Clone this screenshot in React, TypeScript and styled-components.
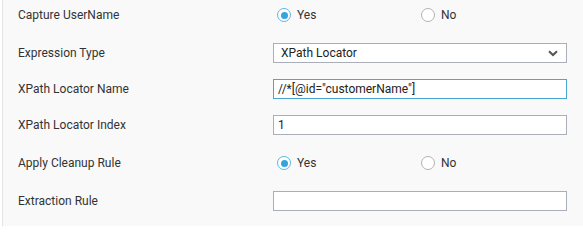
import React from "react";
import styled, { createGlobalStyle } from "styled-components";

const Global = createGlobalStyle`
  html, body { margin: 0; padding: 0; background: #ffffff; }
  body { font-family: Roboto, "Noto Sans", Arial, sans-serif; }
  * { box-sizing: border-box; }
`;

const Page = styled.div`
  margin-left: 2px;
  width: 581px;
  height: 226px;
  background: #f9f9f9;
  border-left: 1px solid #e4e4e4;
  padding: 3px 16px 0 15px;
  display: flex;
  flex-direction: column;
  gap: 16px;
`;

const Row = styled.div<{ $tall?: boolean }>`
  display: grid;
  grid-template-columns: 255px 294px;
  align-items: center;
  height: ${(p) => (p.$tall ? "24px" : "20px")};
`;

const Label = styled.div`
  font-size: 12px;
  color: #333333;
  line-height: 14px;
`;

const RadioGroup = styled.div`
  display: flex;
  align-items: center;
  padding-left: 4px;
`;

const Option = styled.label`
  width: 144px;
  display: flex;
  align-items: center;
  gap: 6px;
  font-size: 12px;
  color: #333333;
`;

const Circle = styled.span<{ $on?: boolean }>`
  width: 14px;
  height: 14px;
  border-radius: 50%;
  background: #ffffff;
  border: 1px solid ${(p) => (p.$on ? "#5ab6e2" : "#b3b3b3")};
  display: flex;
  align-items: center;
  justify-content: center;
  &::after {
    content: "";
    width: 7px;
    height: 7px;
    border-radius: 50%;
    background: ${(p) => (p.$on ? "#35a3dc" : "transparent")};
  }
`;

const Field = styled.div<{ $focus?: boolean }>`
  height: 20px;
  background: #ffffff;
  border: 1px solid ${(p) => (p.$focus ? "#4ba6d4" : "#a9aeb8")};
  display: flex;
  align-items: center;
  padding: 0 4px;
  font-size: 12px;
  color: #222222;
`;

const SelectBox = styled(Field)`
  padding: 0 8px 0 7px;
  justify-content: space-between;
`;

const Radio = ({ on, label }: { on?: boolean; label: string }) => (
  <Option>
    <Circle $on={on} />
    {label}
  </Option>
);

const Chevron = () => (
  <svg width="10" height="7" viewBox="0 0 10 7">
    <path d="M1 1.2 L5 5 L9 1.2" fill="none" stroke="#555555" strokeWidth="2" />
  </svg>
);

export default function App() {
  return (
    <>
      <Global />
      <Page>
        <Row $tall>
          <Label>Capture UserName</Label>
          <RadioGroup>
            <Radio on label="Yes" />
            <Radio label="No" />
          </RadioGroup>
        </Row>
        <Row>
          <Label>Expression Type</Label>
          <SelectBox>
            <span>XPath Locator</span>
            <Chevron />
          </SelectBox>
        </Row>
        <Row>
          <Label>XPath Locator Name</Label>
          <Field $focus>//*[@id="customerName"]</Field>
        </Row>
        <Row>
          <Label>XPath Locator Index</Label>
          <Field>1</Field>
        </Row>
        <Row $tall>
          <Label>Apply Cleanup Rule</Label>
          <RadioGroup>
            <Radio on label="Yes" />
            <Radio label="No" />
          </RadioGroup>
        </Row>
        <Row>
          <Label>Extraction Rule</Label>
          <Field></Field>
        </Row>
      </Page>
    </>
  );
}
